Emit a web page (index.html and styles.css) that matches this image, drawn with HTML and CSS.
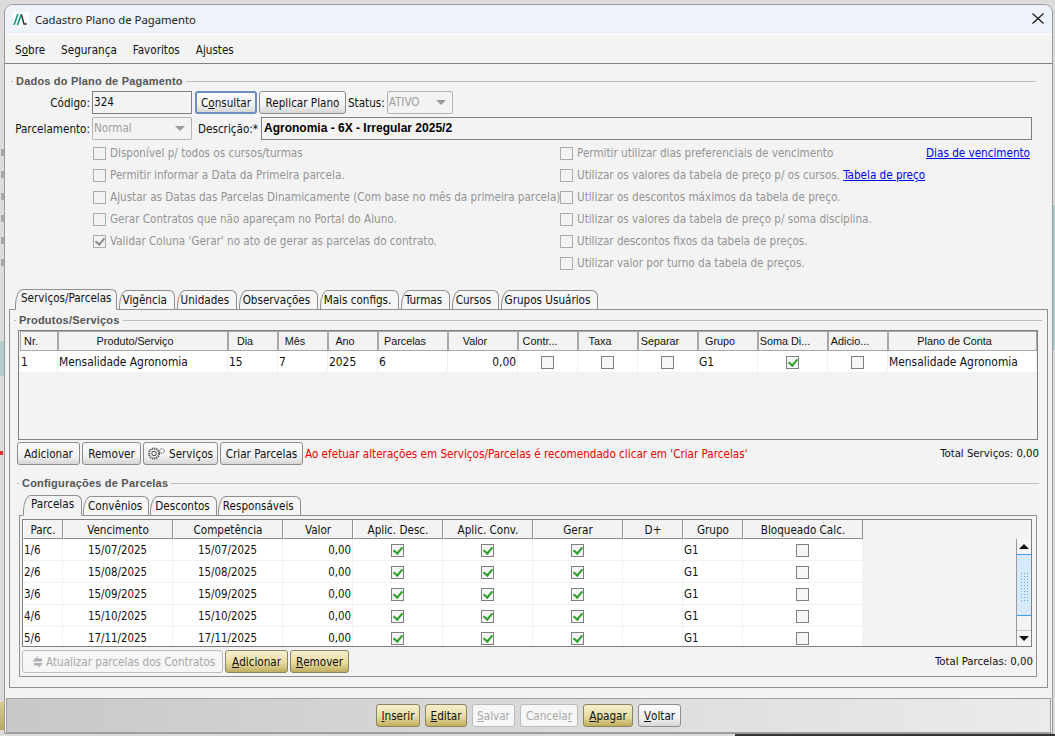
FILE: index.html
```html
<!DOCTYPE html>
<html lang="pt-BR">
<head>
<meta charset="utf-8">
<title>Cadastro Plano de Pagamento</title>
<link rel="stylesheet" href="styles.css">
</head>
<body>
<div class="bg-marks"></div>
<div class="bg-teal-l"></div>
<div class="bg-red"></div>
<div class="bg-gold"></div>
<div class="bg-teal-r"></div>
<div class="bg-dark"></div>
<div class="window">
  <header class="titlebar">
    <svg class="logo" width="16" height="15" viewBox="0 0 16 15"><rect width="16" height="15" fill="#fff"/><path d="M1 13 5 2M4.500 13 8.500 2" stroke="#1c9a7c" stroke-width="1.700" fill="none"/><path d="M8.500 3 11 12h3" stroke="#333" stroke-width="1.500" fill="none"/></svg>
    <span class="title">Cadastro Plano de Pagamento</span>
    <svg class="close" width="12" height="11" viewBox="0 0 12 11"><path d="M.5 .5 11.500 10.500M11.500 .5 .5 10.500" stroke="#111" stroke-width="1.100"/></svg>
  </header>
  <nav class="menubar">
    <span>S<u>o</u>bre</span><span>Segurança</span><span>Favoritos</span><span>Ajustes</span>
  </nav>
  <main class="content">
    <fieldset class="group dados">
      <legend>Dados do Plano de Pagamento</legend>
      <div class="row row-code">
        <label class="lbl lbl-left">Código:</label>
        <div class="input w-code">324</div>
        <button class="btn focus w-cons">C<u>o</u>nsultar</button>
        <button class="btn w-repl">Replicar Plano</button>
        <label class="lbl">Status:</label>
        <div class="select w-status">ATIVO<i class="caret"></i></div>
      </div>
      <div class="row row-desc">
        <label class="lbl lbl-left">Parcelamento:</label>
        <div class="select w-code">Normal<i class="caret"></i></div>
        <label class="lbl lbl-desc">Descrição:*</label>
        <div class="input strong grow">Agronomia - 6X - Irregular 2025/2</div>
      </div>
      <div class="checks">
        <div class="check-col left">
          <div class="opt"><i class="cb"></i>Disponível p/ todos os cursos/turmas</div>
          <div class="opt"><i class="cb"></i>Permitir informar a Data da Primeira parcela.</div>
          <div class="opt"><i class="cb"></i>Ajustar as Datas das Parcelas Dinamicamente (Com base no mês da primeira parcela)</div>
          <div class="opt"><i class="cb"></i>Gerar Contratos que não apareçam no Portal do Aluno.</div>
          <div class="opt"><i class="cb grey-tick"></i>Validar Coluna 'Gerar' no ato de gerar as parcelas do contrato.</div>
        </div>
        <div class="check-col right">
          <div class="opt"><i class="cb"></i>Permitir utilizar dias preferenciais de vencimento<a class="link push" href="#">Dias de vencimento</a></div>
          <div class="opt"><i class="cb"></i>Utilizar os valores da tabela de preço p/ os cursos.<a class="link" href="#">Tabela de preço</a></div>
          <div class="opt"><i class="cb"></i>Utilizar os descontos máximos da tabela de preço.</div>
          <div class="opt"><i class="cb"></i>Utilizar os valores da tabela de preço p/ soma disciplina.</div>
          <div class="opt"><i class="cb"></i>Utilizar descontos fixos da tabela de preços.</div>
          <div class="opt"><i class="cb"></i>Utilizar valor por turno da tabela de preços.</div>
        </div>
      </div>
    </fieldset>

    <div class="tabs outer-tabs">
      <span class="tab active">Serviços/Parcelas</span><span class="tab">Vigência</span><span class="tab">Unidades</span><span class="tab">Observações</span><span class="tab">Mais configs.</span><span class="tab">Turmas</span><span class="tab">Cursos</span><span class="tab">Grupos Usuários</span>
    </div>
    <section class="tabpanel outer-panel">
      <fieldset class="group produtos">
        <legend>Produtos/Serviços</legend>
        <div class="gridbox grid-prod">
          <table class="grid">
            <colgroup><col class="p1"><col class="p2"><col class="p3"><col class="p3"><col class="p3"><col class="p6"><col class="p6"><col class="p8"><col class="p8"><col class="p8"><col class="p8"><col class="p6"><col class="p8"><col class="p14"></colgroup>
            <thead><tr><th>Nr.</th><th>Produto/Serviço</th><th>Dia</th><th>Mês</th><th>Ano</th><th>Parcelas</th><th>Valor</th><th>Contr...</th><th>Taxa</th><th>Separar</th><th>Grupo</th><th>Soma Di...</th><th>Adicio...</th><th>Plano de Conta</th></tr></thead>
            <tbody><tr><td>1</td><td>Mensalidade Agronomia</td><td>15</td><td>7</td><td>2025</td><td>6</td><td class="num">0,00</td><td class="ctr"><i class="cb on"></i></td><td class="ctr"><i class="cb on"></i></td><td class="ctr"><i class="cb on"></i></td><td>G1</td><td class="ctr"><i class="cb on tick"></i></td><td class="ctr"><i class="cb on"></i></td><td>Mensalidade Agronomia</td></tr></tbody>
          </table>
        </div>
        <div class="row actions prod-actions">
          <button class="btn w-add">Adicionar</button>
          <button class="btn w-rem">Remover</button>
          <button class="btn w-srv"><svg class="gear" width="17" height="13" viewBox="0 0 17 13"><circle cx="6" cy="6.500" r="5" fill="none" stroke="#555" stroke-width="2" stroke-dasharray="1.300 .8"/><circle cx="6" cy="6.500" r="2.200" fill="none" stroke="#444"/><circle cx="14" cy="4" r="2.400" fill="none" stroke="#555" stroke-dasharray="1 .6"/></svg>Serviços</button>
          <button class="btn w-cri">Criar Parcelas</button>
          <span class="warn">Ao efetuar alterações em Serviços/Parcelas é recomendado clicar em 'Criar Parcelas'</span>
          <span class="total">Total Serviços: 0,00</span>
        </div>
      </fieldset>

      <fieldset class="group config">
        <legend>Configurações de Parcelas</legend>
        <div class="tabs inner-tabs">
          <span class="tab active">Parcelas</span><span class="tab">Convênios</span><span class="tab">Descontos</span><span class="tab">Responsáveis</span>
        </div>
        <section class="tabpanel inner-panel">
          <div class="gridbox grid-parc">
            <table class="grid">
              <colgroup><col class="q1"><col class="q2"><col class="q2"><col class="q4"><col class="q5"><col class="q5"><col class="q5"><col class="q8"><col class="q8"><col class="q10"></colgroup>
              <thead><tr><th>Parc.</th><th>Vencimento</th><th>Competência</th><th>Valor</th><th>Aplic. Desc.</th><th>Aplic. Conv.</th><th>Gerar</th><th>D+</th><th>Grupo</th><th>Bloqueado Calc.</th></tr></thead>
              <tbody>
                <tr><td>1/6</td><td class="ctr">15/07/2025</td><td class="ctr">15/07/2025</td><td class="num">0,00</td><td class="ctr"><i class="cb on tick"></i></td><td class="ctr"><i class="cb on tick"></i></td><td class="ctr"><i class="cb on tick"></i></td><td></td><td>G1</td><td class="ctr"><i class="cb on"></i></td></tr>
                <tr><td>2/6</td><td class="ctr">15/08/2025</td><td class="ctr">15/08/2025</td><td class="num">0,00</td><td class="ctr"><i class="cb on tick"></i></td><td class="ctr"><i class="cb on tick"></i></td><td class="ctr"><i class="cb on tick"></i></td><td></td><td>G1</td><td class="ctr"><i class="cb on"></i></td></tr>
                <tr><td>3/6</td><td class="ctr">15/09/2025</td><td class="ctr">15/09/2025</td><td class="num">0,00</td><td class="ctr"><i class="cb on tick"></i></td><td class="ctr"><i class="cb on tick"></i></td><td class="ctr"><i class="cb on tick"></i></td><td></td><td>G1</td><td class="ctr"><i class="cb on"></i></td></tr>
                <tr><td>4/6</td><td class="ctr">15/10/2025</td><td class="ctr">15/10/2025</td><td class="num">0,00</td><td class="ctr"><i class="cb on tick"></i></td><td class="ctr"><i class="cb on tick"></i></td><td class="ctr"><i class="cb on tick"></i></td><td></td><td>G1</td><td class="ctr"><i class="cb on"></i></td></tr>
                <tr><td>5/6</td><td class="ctr">17/11/2025</td><td class="ctr">17/11/2025</td><td class="num">0,00</td><td class="ctr"><i class="cb on tick"></i></td><td class="ctr"><i class="cb on tick"></i></td><td class="ctr"><i class="cb on tick"></i></td><td></td><td>G1</td><td class="ctr"><i class="cb on"></i></td></tr>
              </tbody>
            </table>
            <div class="scrollbar">
              <span class="arrow up"></span>
              <span class="thumb"></span>
              <span class="track"></span>
              <span class="arrow down"></span>
            </div>
          </div>
          <div class="row actions inner-actions">
            <button class="btn off w-atual"><svg class="sync" width="14" height="14" viewBox="0 0 14 14"><path d="M2 6 6.500 1v2.500H11V6.500H2zM12 8 7.500 13v-2.500H3V8z" fill="#b0b0b0"/></svg>Atualizar parcelas dos Contratos</button>
            <button class="btn gold w-add"><u>A</u>dicionar</button>
            <button class="btn gold w-rem"><u>R</u>emover</button>
            <span class="total">Total Parcelas: 0,00</span>
          </div>
        </section>
      </fieldset>
    </section>
  </main>
  <footer class="footer">
    <button class="btn gold w-44"><u>I</u>nserir</button>
    <button class="btn gold w-42"><u>E</u>ditar</button>
    <button class="btn off w-43"><u>S</u>alvar</button>
    <button class="btn off w-58">Cancela<u>r</u></button>
    <button class="btn gold w-50"><u>A</u>pagar</button>
    <button class="btn w-43"><u>V</u>oltar</button>
  </footer>
</div>
</body>
</html>
```
FILE: styles.css
```css
* { box-sizing: border-box; }
html, body { height: 100%; }
body {
  margin: 0;
  padding: 5px 3px 3px 5px;
  overflow: hidden;
  background: #dcdcdc;
  font: 11.600px/16px "DejaVu Sans Condensed", "Noto Sans", sans-serif;
  color: #111;
}

/* Parts of the application behind the dialog */
.bg-marks {
  position: absolute;
  left: 1px;
  top: 149px;
  width: 3px;
  height: 118px;
  background: repeating-linear-gradient(#a8a8a8 0 7px, transparent 7px 22px);
}
.bg-teal-l { position: absolute; left: 0; top: 341px; width: 5px; height: 35px; background: #b4cdcd; }
.bg-red { position: absolute; left: 0; top: 451px; width: 3px; height: 4px; background: #e03030; }
.bg-gold { position: absolute; left: 0; top: 702px; width: 5px; height: 28px; background: linear-gradient(#d8cc90, #b8a860); }
.bg-teal-r { position: absolute; right: 0; top: 205px; width: 3px; height: 145px; background: #a9cbca; }
.bg-dark { position: absolute; left: 735px; right: 0; bottom: 0; height: 2px; background: #333; }

.window {
  position: relative;
  width: 1047px;
  height: 728px;
  display: flex;
  flex-direction: column;
  background: #f3f3f3;
  border-radius: 8px 8px 0 0;
  box-shadow: 0 0 0 1px #9a9a9a;
  overflow: hidden;
}
.titlebar {
  height: 30px;
  flex: none;
  display: flex;
  align-items: center;
  padding: 0 8px;
  background: #eef2f9;
  border-bottom: 1px solid #fff;
}
.logo { flex: none; }
.title { margin-left: 6px; flex: 1; font: 11.300px/16px "Noto Sans", sans-serif; color: #222; }
.close { margin-top: -2px; }
.menubar {
  height: 29px;
  flex: none;
  display: flex;
  align-items: center;
  gap: 16px;
  padding: 1px 10px 0;
  border-bottom: 1px solid #808080;
}
.content { flex: 1; min-height: 0; padding: 10px 4px 0; display: flex; flex-direction: column; }
.group {
  margin: 0;
  padding: 0;
  border: 0;
  border-top: 1px solid #bdbdbd;
  min-width: 0;
}
.group legend {
  margin-left: 2px;
  padding: 0 3px;
  font: 700 11px/14px "Liberation Sans", sans-serif;
  letter-spacing: .2px;
  color: #555;
}
.dados { height: 200px; width: 1025px; margin-left: 2px; }
.row { display: flex; align-items: center; }
.row-code { height: 23px; margin-top: 3px; gap: 2px; }
.row-desc { height: 23px; margin-top: 3px; gap: 2px; margin-right: 4px; }
.lbl { white-space: nowrap; }
.lbl-left { width: 79px; text-align: right; }
.lbl-desc { margin-left: 4px; width: 61px; }
.input, .select {
  height: 23px;
  border: 1px solid #808080;
  padding: 0 1px;
  line-height: 21px;
  background: #f3f3f3;
  position: relative;
}
.select { color: #a0a0a0; border-color: #b4b4b4; border-radius: 2px; }
.strong { font: 700 12px/21px "Liberation Sans", sans-serif; color: #000; padding: 0 2px; }
.grow { flex: 1; }
.w-code { width: 100px; }
.w-status { width: 66px; }
.w-cons { width: 62px; margin-left: 1px; }
.w-repl { width: 87px; }
.w-add { width: 63px; }
.w-rem { width: 59px; }
.w-srv { width: 75px; }
.w-cri { width: 83px; }
.w-42 { width: 42px; }
.w-43 { width: 43px; }
.w-44 { width: 44px; }
.w-50 { width: 50px; }
.w-58 { width: 58px; }
.caret {
  position: absolute;
  right: 6px;
  top: 8px;
  border: 5px solid transparent;
  border-top: 5px solid #9a9a9a;
  border-bottom: 0;
}
.btn {
  height: 23px;
  padding: 0;
  font: inherit;
  color: #111;
  border: 1px solid #8d8d8d;
  border-radius: 3px;
  background: linear-gradient(#fbfbfb, #f3f3f3 60%, #d6d6d6);
  white-space: nowrap;
  display: inline-flex;
  align-items: center;
  justify-content: center;
}
.btn.focus { border: 2px solid #6d8fc0; }
.btn.gold { background: linear-gradient(#f6efd0, #e8dca0 55%, #bfae5e); border-color: #8c8560; }
.btn.off { color: #a8a8a8; background: #f6f6f6; border-color: #bcbcbc; }
.btn.w-atual { width: 201px; justify-content: flex-start; padding-left: 8px; }
.checks { display: flex; margin-top: 2px; padding-left: 82px; }
.check-col { display: flex; flex-direction: column; }
.check-col.left { width: 467px; flex: none; }
.check-col.right { flex: 1; }
.opt {
  height: 22px;
  display: flex;
  align-items: center;
  color: #949494;
  white-space: nowrap;
}
.cb {
  flex: none;
  width: 13px;
  height: 13px;
  margin-right: 4px;
  border: 1px solid #ababab;
  background: #f3f3f3;
  display: inline-flex;
  align-items: center;
  justify-content: center;
}
.cb.on { margin: 0; border-color: #7f7f7f; background: #f6f6f6; vertical-align: middle; }
.tick::after, .grey-tick::after {
  content: "";
  width: 4px;
  height: 7px;
  margin-top: -2px;
  border: solid #2ca02c;
  border-width: 0 2px 2px 0;
  transform: rotate(40deg);
}
.grey-tick::after { border-color: #8c8c8c; }
.link { color: #0000f0; text-decoration: underline; margin-left: 3px; }
.push { margin-left: auto; margin-right: 6px; }
.tabs { display: flex; align-items: flex-end; position: relative; z-index: 1; }
.tab {
  height: 19px;
  padding: 0 6.500px 0 3px;
  border: 1px solid #8f8f8f;
  border-bottom: 0;
  border-radius: 8px 6px 0 0 / 16px 6px 0 0;
  background: #f6f6f6;
  line-height: 18px;
  white-space: nowrap;
  margin-right: 2px;
}
.tab.active {
  height: 21px;
  padding: 0 4px 0 5px;
  background: #f3f3f3;
  margin-bottom: -1px;
  line-height: 17px;
  border-bottom: 1px solid #f3f3f3;
}
.outer-tabs { height: 20px; padding-left: 6px; margin-top: 15px; flex: none; }
.outer-panel { flex: none; height: 379px; border: 1px solid #8f8f8f; padding: 3px 5px 0 4px; }
.grid-prod { height: 110px; border: 1px solid #808080; margin: 3px 4px 0; padding-left: 1px; }
.gridbox { background: #f3f3f3; overflow: hidden; position: relative; }
.grid { border-collapse: separate; border-spacing: 0; table-layout: fixed; }
.grid th {
  height: 20px;
  padding: 0 16px 0 0;
  font: 400 10.800px/14px "Liberation Sans", sans-serif;
  text-align: center;
  border: 1px solid #a8a8a8;
  background: #f3f3f3;
  white-space: nowrap;
  overflow: hidden;
}
.grid td {
  height: 22px;
  padding: 0 1px;
  background: #fff;
  border-right: 1px solid #f1f1f1;
  border-bottom: 1px solid #f1f1f1;
  white-space: nowrap;
  overflow: hidden;
}
.grid-prod td { font-size: 11.900px; }
.grid-parc td { font-size: 11.400px; }
.grid .num { text-align: right; }
.grid .ctr { text-align: center; }
.grid-prod .grid { width: 1017px; }
.p1 { width: 38px; } .p2 { width: 170px; } .p3 { width: 50px; } .p6 { width: 70px; } .p8 { width: 60px; } .p14 { width: 149px; }
.actions { gap: 2px; height: 23px; }
.prod-actions { margin: 2px 3px 0; }
.warn { color: #f00000; }
.total { margin-left: auto; font-size: 11.300px; }
.gear { margin-right: 4px; }
.sync { margin-right: 1px; }
.config { margin: 11px 3px 0; }
.inner-tabs { height: 19px; padding-left: 4px; margin: 6px 0 0 2px; }
.inner-tabs .tab { margin-right: 1px; padding: 0 6px 0 4px; }
.inner-tabs .tab.active { padding: 0 7px; margin-right: 1px; }
.inner-panel { border: 1px solid #8f8f8f; height: 162px; padding: 3px 3px 0 2px; margin: 0 2px; background: #f3f3f3; }
.grid-parc { height: 128px; margin-right: 1px; border: 1px solid #808080; }
.inner-actions .total { margin-right: 0; }
.grid-parc .grid { width: 840px; }
.grid-parc th {
  height: 19px;
  padding: 1px 0 0;
  font: 11.600px/14px "DejaVu Sans Condensed", "Noto Sans", sans-serif;
  border-width: 0 1px 1px 1px;
  border-color: #8e8e8e #8e8e8e #8e8e8e #fff;
}
.q1 { width: 40px; } .q2 { width: 110px; } .q4 { width: 70px; } .q5 { width: 90px; } .q8 { width: 60px; } .q10 { width: 120px; }
.scrollbar {
  position: absolute;
  right: 0;
  top: 19px;
  bottom: 0;
  width: 15px;
  display: flex;
  flex-direction: column;
  background: #f3f3f3;
  border-left: 1px solid #9a9a9a;
}
.arrow { height: 15px; flex: none; display: flex; align-items: center; justify-content: center; background: #f6f6f6; }
.arrow::after { content: ""; border: 5px solid transparent; }
.arrow.up::after { border-bottom: 5px solid #111; border-top: 0; }
.arrow.down::after { border-top: 5px solid #111; border-bottom: 0; }
.thumb {
  flex: 1;
  background: #d7e9fc;
  border-top: 1px solid #3f9bef;
  border-bottom: 1px solid #3f9bef;
  position: relative;
}
.thumb::after {
  content: "";
  position: absolute;
  left: 3px;
  right: 2px;
  top: 17px;
  height: 30px;
  background: radial-gradient(circle, #57a9f3 40%, transparent 45%) 0 0 / 3px 3px;
}
.track { height: 15px; flex: none; border-bottom: 1px solid #c8c8c8; }
.inner-actions { margin-top: 3px; }
.footer {
  height: 35px;
  flex: none;
  display: flex;
  align-items: center;
  justify-content: center;
  gap: 5px;
  margin: 0 1px;
  border: 1px solid #a0a0a0;
  background: linear-gradient(90deg, #c8c8c8, #ebebeb);
}
```
